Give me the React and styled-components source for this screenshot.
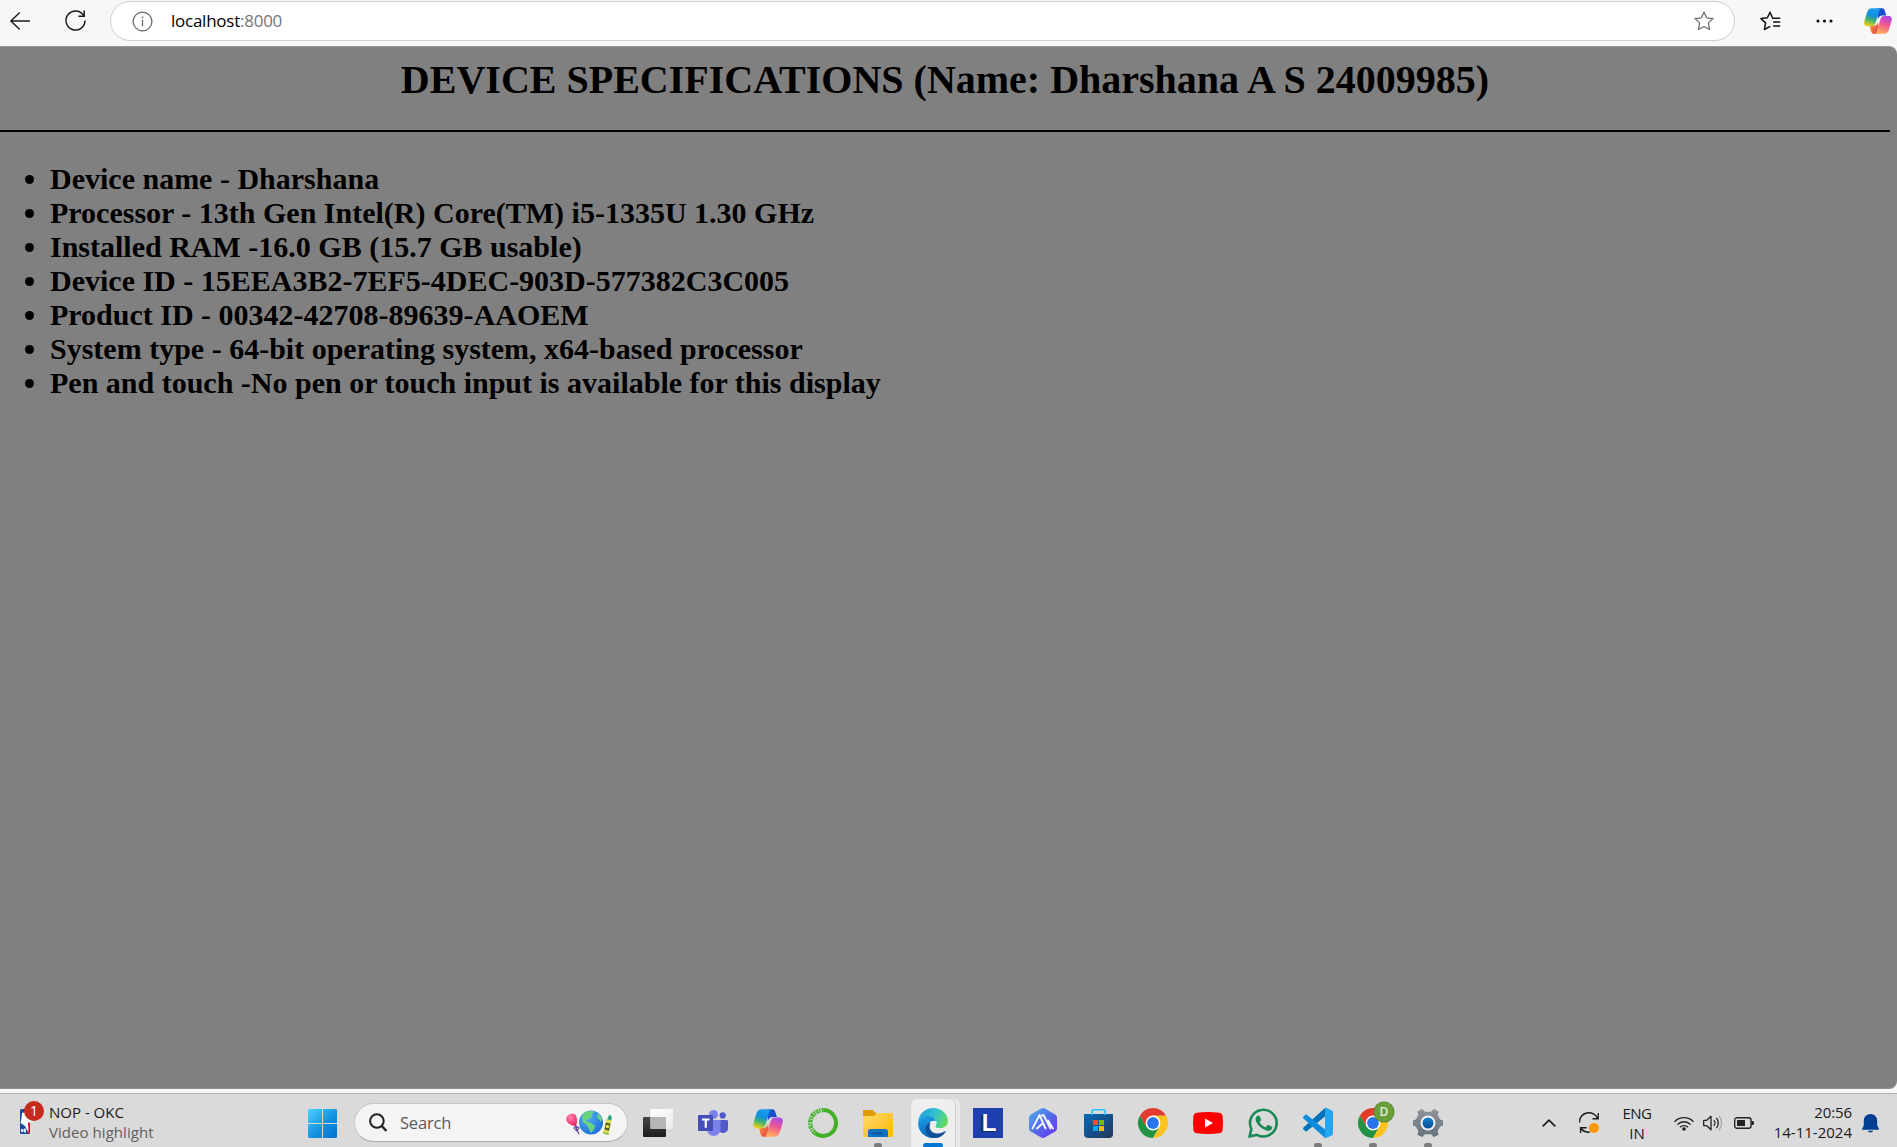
import React, { useId } from "react";
import styled, { createGlobalStyle } from "styled-components";

const GlobalStyle = createGlobalStyle`
  * { box-sizing: border-box; }
  html, body { margin: 0; padding: 0; overflow: hidden; }
  svg { display: block; flex: none; overflow: visible; }
`;

const UI_FONT = `"Open Sans", "Noto Sans", sans-serif`;

const Screen = styled.div`
  width: 1897px;
  height: 1147px;
  display: flex;
  flex-direction: column;
  background: #f7f7f7;
  overflow: hidden;
  font-family: ${UI_FONT};
`;

/* ---------- browser toolbar ---------- */

const Toolbar = styled.header`
  height: 46px;
  flex: none;
  display: flex;
  align-items: flex-start;
  background: #f7f7f7;
`;

const ToolButton = styled.button`
  border: 0;
  padding: 0;
  background: none;
  height: ${(p) => p.$height || 41}px;
  width: ${(p) => p.$width}px;
  margin-left: ${(p) => p.$gap || 0}px;
  display: flex;
  align-items: center;
  justify-content: center;
`;

const AddressBar = styled.div`
  width: 1625px;
  height: 40px;
  margin: 1px 0 0 15px;
  padding: 0 20px 0 21px;
  display: flex;
  align-items: center;
  background: #fff;
  border: 1px solid #cfcfcf;
  border-radius: 20px;
`;

const Url = styled.span`
  flex: 1;
  margin-left: 18px;
  font-size: 17px;
  line-height: 24px;
  letter-spacing: -0.25px;
  color: #000;
`;

const Port = styled.span`
  color: #767676;
`;

/* ---------- page ---------- */

const Page = styled.main`
  height: 1043px;
  flex: none;
  background: #808080;
  border-top: 1px solid #999;
  border-bottom: 1px solid #8f8f8f;
  border-radius: 0 8px 8px 0;
  font-family: "Liberation Serif", "Times New Roman", serif;
  font-weight: bold;
  color: #000;
  padding: 10px 7px 0 0;
`;

const Heading = styled.h1`
  margin: 0;
  font-size: 40px;
  line-height: 46px;
  text-align: center;
`;

const Rule = styled.hr`
  margin: 27px 0 0;
  border: 0;
  height: 2px;
  background: #000;
`;

const SpecList = styled.ul`
  margin: 30px 0 0;
  padding: 0 0 0 50px;
  font-size: 30px;
  line-height: 34px;
`;

/* ---------- taskbar ---------- */

const Taskbar = styled.footer`
  height: 54px;
  flex: none;
  margin-top: 4px;
  padding-top: 5px;
  display: flex;
  align-items: flex-start;
  background: #dadada;
  border-top: 1px solid #adadad;
  overflow: hidden;
`;

const Widget = styled.div`
  width: 300px;
  flex: none;
  height: 48px;
  padding: 3px 0 0 20px;
  display: flex;
`;

const WidgetIcon = styled.div`
  position: relative;
  width: 29px;
  padding-top: 7px;
`;

const Count = styled.span`
  position: absolute;
  left: 4px;
  top: -1px;
  width: 20px;
  height: 20px;
  border-radius: 50%;
  background: #c42b1c;
  color: #fff;
  font-size: 14px;
  line-height: 20px;
  text-align: center;
`;

const Lines = styled.div`
  display: flex;
  flex-direction: column;
  align-items: ${(p) => p.$align || "flex-start"};
  width: ${(p) => (p.$width ? p.$width + "px" : "auto")};
  margin-bottom: ${(p) => p.$bottom || 0}px;
  margin-right: ${(p) => p.$gap || 0}px;
`;

const Label = styled.span`
  font-size: 15px;
  line-height: 20px;
  white-space: nowrap;
  letter-spacing: ${(p) => p.$spacing || 0}px;
  color: ${(p) => p.$color || "#1b1b1b"};
`;

const Apps = styled.nav`
  display: flex;
  flex: none;
  gap: 11px;
  height: 48px;
`;

const AppButton = styled.div`
  position: relative;
  width: 44px;
  height: 48px;
  display: flex;
  align-items: center;
  justify-content: center;
  border-radius: 6px 6px 0 0;
  background: ${(p) => (p.$active ? "#eeeeee" : "none")};
  box-shadow: ${(p) => (p.$active ? "1px 0 0 #cdcdcd, 5px 0 0 #e9e9e9" : "none")};
`;

const Indicator = styled.span`
  position: absolute;
  bottom: -1px;
  left: 50%;
  transform: translateX(-50%);
  width: ${(p) => (p.$active ? 20 : 8)}px;
  height: 5px;
  border-radius: 3px;
  background: ${(p) => (p.$active ? "#0078d4" : "#7c7c7c")};
`;

const Search = styled.div`
  width: 274px;
  height: 39px;
  margin: 4px -3px 0 -1px;
  padding: 0 15px 0 14px;
  display: flex;
  align-items: center;
  background: #f4f4f4;
  border: 1px solid #c6c6c6;
  border-bottom-color: #adadad;
  border-radius: 20px;
`;

const SearchText = styled.span`
  flex: 1;
  margin-left: 13px;
  font-size: 16.5px;
  letter-spacing: -0.2px;
  color: #5a5a5a;
`;

const ProfileBadge = styled.span`
  position: absolute;
  right: 1px;
  top: 3px;
  width: 20px;
  height: 20px;
  border-radius: 50%;
  background: #689f38;
  box-shadow: 0 0 0 0.5px #4c7a26;
  color: #e5f0da;
  font-size: 12px;
  font-weight: 600;
  line-height: 20px;
  text-align: center;
`;

const Tray = styled.div`
  margin-left: auto;
  flex: none;
  height: 48px;
  display: flex;
  align-items: center;
  padding-right: 18px;
`;

const Slot = styled.div`
  width: ${(p) => p.$width}px;
  flex: none;
  margin-right: ${(p) => p.$gap || 0}px;
  display: flex;
  justify-content: center;
`;

/* ---------- toolbar icons ---------- */

const BackIcon = () => (
  <svg width="20" height="18" viewBox="0 0 20 18" fill="none" stroke="#1b1b1b" strokeWidth="1.4">
    <path d="M20 9H.9M9.7.6.9 9l8.8 8.4" />
  </svg>
);

const ReloadIcon = () => (
  <svg width="21" height="21" viewBox="0 0 21 21" fill="none" stroke="#1b1b1b" strokeWidth="1.5">
    <path d="M18.9 6.1A9.5 9.5 0 1 0 20 10.4" />
    <path d="M19.2.6v5.7h-5.8" />
  </svg>
);

const InfoIcon = () => (
  <svg width="21" height="21" viewBox="0 0 21 21" fill="none" stroke="#6b6b6b" strokeWidth="1.3">
    <circle cx="10.5" cy="10.5" r="9.4" />
    <path d="M10.5 9v6.3" />
    <circle cx="10.5" cy="6.4" r=".9" fill="#6b6b6b" stroke="none" />
  </svg>
);

const StarIcon = () => (
  <svg width="20" height="20" viewBox="0 0 20 20" fill="none" stroke="#6d6d6d" strokeWidth="1.3" strokeLinejoin="round">
    <path d="m10 1.2 2.6 5.6 6.4.8-4.6 4.3 1.2 6.6-5.6-3-5.6 3 1.2-6.6L1 7.6l6.4-.8z" />
  </svg>
);

const FavoritesIcon = () => (
  <svg width="21" height="20" viewBox="0 0 21 20" fill="none" stroke="#111" strokeWidth="1.5" strokeLinejoin="round" strokeLinecap="round">
    <path d="M12.7 7.2 10 1.2 7.4 6.8 1 7.6l4.6 4.3-1.2 6.6 5.3-2.8M13.7 11h6M13.7 15h6M12.7 7.2h7" />
  </svg>
);

const MoreIcon = () => (
  <svg width="17" height="4" viewBox="0 0 17 4" fill="#111">
    <circle cx="2" cy="2" r="1.6" />
    <circle cx="8.5" cy="2" r="1.6" />
    <circle cx="15" cy="2" r="1.6" />
  </svg>
);

const CopilotIcon = ({ size = 30 }) => {
  const id = useId().replace(/:/g, "");
  return (
    <svg width={size} height={(size * 28) / 30} viewBox="0 0 30 28">
      <defs>
        <linearGradient id={id + "a"} x1=".6" y1="0" x2=".3" y2="1">
          <stop offset="0" stopColor="#1b9df0" />
          <stop offset=".4" stopColor="#1390dc" />
          <stop offset=".66" stopColor="#45b36b" />
          <stop offset="1" stopColor="#f4d313" />
        </linearGradient>
        <linearGradient id={id + "b"} x1=".7" y1="0" x2=".4" y2="1">
          <stop offset="0" stopColor="#a84be8" />
          <stop offset=".45" stopColor="#ee5594" />
          <stop offset="1" stopColor="#ffb05c" />
        </linearGradient>
        <linearGradient id={id + "c"} x1="0" y1="0" x2="1" y2="1">
          <stop offset="0" stopColor="#1656c4" />
          <stop offset="1" stopColor="#1948d6" />
        </linearGradient>
        <linearGradient id={id + "d"} x1="0" y1="0" x2="1" y2="1">
          <stop offset="0" stopColor="#f9a13c" />
          <stop offset="1" stopColor="#e2364b" />
        </linearGradient>
      </defs>
      <path fill={`url(#${id}c)`} d="M14 .3h5.6c1.9 0 2.5 1.7 3.2 4.2L23.9 8h-4c-3 0-4 1.6-5 4z" />
      <path fill={`url(#${id}d)`} d="M16 27.7h-5.6c-1.9 0-2.5-1.7-3.2-4.2L6.1 19h4c3 0 4-1.6 5-4z" />
      <path fill={`url(#${id}a)`} d="M8.8.3h9.4c-1.3.7-1.9 2.6-2.6 5l-2.8 9.4c-1 3.2-2 4.8-4.6 4.8H4.4C.6 19.5-.5 17.3.5 13.8L3.2 5C4.2 1.8 5.8.3 8.8.3z" />
      <path fill={`url(#${id}b)`} d="M21.2 27.7h-9.4c1.3-.7 1.9-2.6 2.6-5l2.8-9.4c1-3.2 2-4.8 4.6-4.8h3.8c3.8 0 4.9 2.2 3.9 5.7L26.8 23c-1 3.2-2.6 4.7-5.6 4.7z" />
    </svg>
  );
};

/* ---------- taskbar icons ---------- */

const NbaIcon = () => (
  <svg width="10" height="25" viewBox="0 0 10 25">
    <rect width="10" height="25" rx="1.5" fill="#17479e" />
    <path fill="#c8102e" d="M6 0h4v23.5L9 25H8L6 16z" />
    <path fill="#fff" d="m2 4 4-1 5 6-1 5-2-1 .5 10.500L5 17l-4.500-3 1-5z" />
    <path stroke="#dce4f4" strokeWidth="1.100" fill="none" d="M1.500 23v-3l1.500 3v-3m1.500 0v3h1v-3z" />
  </svg>
);

const WindowsIcon = () => (
  <svg width="29" height="29" viewBox="0 0 29 29">
    <defs>
      <linearGradient id="win" x1="0" y1="0" x2="29" y2="29" gradientUnits="userSpaceOnUse">
        <stop offset="0" stopColor="#4cd3ff" />
        <stop offset=".55" stopColor="#1592df" />
        <stop offset="1" stopColor="#0070d1" />
      </linearGradient>
    </defs>
    <path fill="url(#win)" d="M1 0h13v14H0V1zM15 0h13l1 1v13H15zM0 15h14v14H1l-1-1zM15 15h14v13l-1 1H15z" />
  </svg>
);

const SearchIcon = () => (
  <svg width="18" height="19" viewBox="0 0 18 19" fill="none" stroke="#222" strokeWidth="2">
    <circle cx="7.9" cy="8" r="6.8" />
    <path strokeWidth="2.5" d="m12.8 13 4.6 5" />
  </svg>
);

const DoodleIcon = () => (
  <svg width="46" height="26" viewBox="0 0 46 26">
    <defs>
      <radialGradient id="globe" cx=".35" cy=".3" r=".8">
        <stop offset="0" stopColor="#55adf5" />
        <stop offset="1" stopColor="#176cd2" />
      </radialGradient>
      <radialGradient id="balloon" cx=".4" cy=".3" r=".7">
        <stop offset="0" stopColor="#ff83ac" />
        <stop offset="1" stopColor="#f02468" />
      </radialGradient>
    </defs>
    <path fill="url(#balloon)" d="M5 4c4-1 6 2 6 6 0 3-.5 5-1 6-5 0-9.700-3-9.700-7C.3 6.500 2 4.500 5 4z" />
    <path fill="none" stroke="#67459b" strokeWidth="1.200" d="m10 16-2 2 3 3 2-3-3-2 1 4 2 4" />
    <circle cx="25" cy="12.500" r="12" fill="url(#globe)" />
    <path fill="#68d47b" d="M17 4C19.500 1 24 .2 27 1l1 2-3 1.500 2 1-3 3-3 1-1 2 4 1 5 3-1 4-3 3.500-2-4-2-4-4-3-1-4zM32 3l4 5-1 4-2-3-2-1z" />
    <path fill="#2e9f76" d="m43.500 4.500 2 2 0 4.500-4.500-1.500z" />
    <path fill="#d9e04b" d="m40.500 9 5 1.500-3 14-5.500-1.500z" />
    <path fill="#4d5a2e" d="m39.800 12.500 4.700 1.200-1.600 7-4.300-1.300z" />
    <circle cx="41.500" cy="16.500" r="1.700" fill="#e6e34b" />
    <path fill="#7fc24d" d="m37.400 22 5.400 1.400-.4 1.600-5.500-1.500z" />
  </svg>
);

const TaskViewIcon = () => (
  <svg width="30" height="28" viewBox="0 0 30 28">
    <defs>
      <linearGradient id="tvd" x1="0" y1="0" x2="0" y2="1">
        <stop offset="0" stopColor="#454545" />
        <stop offset="1" stopColor="#1d1d1d" />
      </linearGradient>
      <linearGradient id="tvl" x1="0" y1="0" x2="1" y2="1">
        <stop offset="0" stopColor="#fff" />
        <stop offset="1" stopColor="#eaeaea" />
      </linearGradient>
    </defs>
    <rect x="0" y="8" width="23" height="20" rx="1" fill="url(#tvd)" />
    <rect x="7.500" y="0" width="22.500" height="20" rx="1" fill="url(#tvl)" />
    <path fill="#b5b5b5" d="M7.500 8H23v12H7.500z" />
  </svg>
);

const TeamsIcon = () => (
  <svg width="30" height="26" viewBox="0 0 30 26">
    <circle cx="24.700" cy="5.400" r="3.100" fill="#5059c9" />
    <path fill="#5059c9" d="M20 10h8.500c1 0 1.500.6 1.500 1.500v6.500a5 5 0 0 1-9 3z" />
    <circle cx="15.500" cy="4.400" r="4.500" fill="#7b83eb" />
    <path fill="#7b83eb" d="M9 10h13.500v9c0 4-3 7-6.700 7S9 23 9 19z" />
    <rect y="5" width="15" height="16" rx="1" fill="#464eb8" />
    <path fill="#fff" d="M4 8.500h7.500v2H8.800v7.300H6.700v-7.300H4z" />
  </svg>
);

const AnacondaIcon = () => (
  <svg width="30" height="30" viewBox="0 0 30 30" fill="none">
    <path stroke="#43b02a" strokeWidth="4" d="M15.500 2.100A12.900 12.900 0 1 1 7 25" />
    <path stroke="#43b02a" strokeWidth="4.400" strokeDasharray="2.800 .7 1.600 .9" d="M7 25A12.900 12.900 0 0 1 15.500 2.100" />
    <path stroke="#dadada" strokeWidth=".8" strokeDasharray="1.400 2.100" d="M7 25A12.600 12.600 0 0 1 14 2.500" />
  </svg>
);

const FolderIcon = () => (
  <svg width="30" height="27" viewBox="0 0 30 27">
    <defs>
      <linearGradient id="fold" x1="0" y1="0" x2="1" y2="1">
        <stop offset="0" stopColor="#ffda67" />
        <stop offset="1" stopColor="#fbb70c" />
      </linearGradient>
    </defs>
    <path fill="#de9b00" d="M0 1.200C0 .4.500 0 1.200 0h8.500l3 3H29v7H0z" />
    <path fill="url(#fold)" d="M0 6h10.500L14 3h15c.6 0 1 .4 1 1v22c0 .6-.4 1-1 1H1c-.6 0-1-.4-1-1z" />
    <path fill="#0f6fc0" d="M5 27v-5.500C5 20 6 19 7.500 19h15c1.500 0 2.500 1 2.500 2.500V27z" />
    <rect x="9.500" y="22.500" width="11" height="1.700" rx=".8" fill="#0b4f94" />
  </svg>
);

const EdgeIcon = () => (
  <svg width="30" height="30" viewBox="0 0 30 30">
    <defs>
      <linearGradient id="edgeTop" x1="0" y1=".3" x2="1" y2=".6">
        <stop offset="0" stopColor="#249bd9" />
        <stop offset=".5" stopColor="#30c1d0" />
        <stop offset="1" stopColor="#65dc5b" />
      </linearGradient>
      <linearGradient id="edgeLeft" x1=".2" y1="0" x2=".6" y2="1">
        <stop offset="0" stopColor="#1ca1e6" />
        <stop offset="1" stopColor="#0860b3" />
      </linearGradient>
    </defs>
    <path fill="url(#edgeTop)" d="M.3 13C1.300 5.500 7.500 0 15 0c8.500 0 15 6 15 13 0 4.500-3.600 7.300-8 7.300-3.500 0-4.800-1-4.800-2 0-.7 1.200-1.200 1.200-3.300 0-3.500-3.600-6.700-8.900-6.700C4.500 8.300 1.300 10.800.3 13z" />
    <path fill="url(#edgeLeft)" d="M.1 14C.7 10.600 4 8 9.200 8c4.600 0 7.700 2.300 8.800 5-4.500-1.500-8 2-8 6 0 5 4 9.500 10 10-1.500.6-3.200 1-5 1C6.500 30-.5 23.200.1 14z" />
    <path fill="#124f96" d="M13 14.400c-3.500 5 0 11 6.500 11 4 0 6.500-1.700 7.500-2.200.6-.3 1 .2.600.7-2.600 3.900-6.400 6-10.600 6.100C10.500 29.500 7.500 24 7.700 20c.2-3 2.300-5 5.300-5.600z" />
    <path fill="#eee" d="M18.400 13.800c.4 2.600-1.200 3.700-1.200 4.500 0 1 1.300 2 4.800 2 2 0 3.500-.5 5-1.400-.4 2.500-2.500 3.700-5.500 3.700-6 0-10-3.600-8.900-8.300 1.500-1.500 4-1.700 5.800-.5z" />
  </svg>
);

const LTile = styled.span`
  width: 30px;
  height: 30px;
  background: #1e3fae;
  color: #fff;
  font-family: "Liberation Sans", Arial, sans-serif;
  font-weight: bold;
  font-size: 24px;
  line-height: 29px;
  text-align: center;
  text-indent: 2px;
  text-shadow: -1px 1px 0 #102e58, -2px 1px 0 #102e58;
`;

const HexIcon = () => (
  <svg width="28" height="30" viewBox="0 0 28 30">
    <defs>
      <linearGradient id="hex" x1="0" y1="0" x2="1" y2="1">
        <stop offset="0" stopColor="#4db2e9" />
        <stop offset=".5" stopColor="#536ce9" />
        <stop offset="1" stopColor="#702cf0" />
      </linearGradient>
    </defs>
    <path fill="url(#hex)" d="M11.800.7c1.400-.9 3-.9 4.400 0l9.600 5.500C27.300 7 28 8.200 28 10v10c0 1.800-.7 3-2.200 3.800l-9.600 5.500c-1.400.9-3 .9-4.400 0l-9.600-5.500C.7 23 0 21.800 0 20V10c0-1.800.7-3 2.200-3.800z" />
    <path fill="none" stroke="#f5f5ff" strokeWidth="1.900" strokeLinecap="round" strokeLinejoin="round" d="m3.500 20.500 7-13.500 6 13.500M8 20.500l4.800-4.500M13 7.500l1.500-.5 7 13.500M19 12.500l5 8" />
  </svg>
);

const StoreIcon = () => (
  <svg width="29" height="29" viewBox="0 0 29 29">
    <defs>
      <linearGradient id="store" x1="0" y1="0" x2="1" y2="1">
        <stop offset="0" stopColor="#0669ba" />
        <stop offset="1" stopColor="#243858" />
      </linearGradient>
    </defs>
    <path fill="url(#store)" d="M0 5h29v20c0 2.700-1.300 4-4 4H4c-2.700 0-4-1.300-4-4z" />
    <path fill="none" stroke="#29c3fa" strokeWidth="1.600" d="M8 6V2c0-.8.400-1.200 1.200-1.200h10.600c.8 0 1.200.4 1.200 1.200v4" />
    <path fill="#f25022" d="M9 11h5v5H9z" />
    <path fill="#7fba00" d="M15 11h5v5h-5z" />
    <path fill="#00a4ef" d="M9 17h5v5H9z" />
    <path fill="#ffb900" d="M15 17h5v5h-5z" />
  </svg>
);

const ChromeIcon = () => (
  <svg width="30" height="30" viewBox="0 0 30 30">
    <path fill="#229342" d="M2 7.500a15 15 0 0 0 13 22.500l6.500-11.200L15 15 8.500 18.800z" />
    <path fill="#fcc31e" d="M28 7.500A15 15 0 0 1 15 30l6.500-11.200L15 7.500z" />
    <path fill="#e33b2e" d="M2 7.500 8.500 18.800 15 15V7.500h13A15 15 0 0 0 2 7.500z" />
    <circle cx="15" cy="15" r="7.400" fill="#fff" />
    <circle cx="15" cy="15" r="5.900" fill="#2a75eb" />
  </svg>
);

const YouTubeIcon = () => (
  <svg width="30" height="22" viewBox="0 0 30 22">
    <path fill="#f00" d="M4 .7Q15-.5 26 .7q3.200.3 3.600 3.500.8 6.800 0 13.600-.4 3.200-3.600 3.500-11 1.200-22 0-3.200-.3-3.600-3.500-.8-6.800 0-13.600Q.8 1 4 .7z" />
    <path fill="#fff" d="m12 6.500 8 4.500-8 4.500z" />
  </svg>
);

const WhatsAppIcon = () => (
  <svg width="30" height="30" viewBox="0 0 30 30">
    <path fill="none" stroke="#188a55" strokeWidth="2.600" strokeLinejoin="round" d="M1.500 28.600 3.400 21A13.300 13.300 0 1 1 9 26.800z" />
    <path fill="#188a55" d="M10.500 7.700c.7 0 1 .1 1.300.8l1.300 3.100c.2.600-.8 1.700-1.200 2.200-.2.300-.2.500 0 .9 1.200 2 2.900 3.500 5.100 4.400.5.200.7.1 1-.2l1.400-1.700c.3-.4.600-.4 1-.2l3.100 1.500c.4.200.7.300.7.6.1 1-.4 2.500-1.500 3.100-1.500.9-3.200.7-5 .1-4.300-1.500-7.500-4.700-9.300-8-1-2-1.200-4.600.7-6.200.4-.3.800-.4 1.400-.4z" />
  </svg>
);

const VSCodeIcon = () => (
  <svg width="30" height="30" viewBox="0 0 30 30">
    <path fill="#0072b7" d="M30 5.500 22 0 .5 19.600c-.6.600-.6 1.400 0 2l1.700 1.500c.4.400 1 .4 1.500.1L22 8.500z" />
    <path fill="#0d8ddb" d="M30 24.500 22 30 .5 10.500c-.6-.6-.6-1.400 0-2l1.700-1.600c.4-.4 1-.4 1.500-.1L22 21.500z" />
    <path fill="#27a5ef" d="M22 0c.7-.3 1.300-.1 2 .2l4.900 2.400c.7.300 1.100 1 1.100 1.800v21.200c0 .8-.4 1.500-1.100 1.800L24 29.800c-.7.300-1.300.5-2 .2z" />
  </svg>
);

const SettingsIcon = () => (
  <svg width="30" height="28" viewBox="0 0 30 28">
    <defs>
      <linearGradient id="gear" x1="0" y1="0" x2="0" y2="1">
        <stop offset="0" stopColor="#8e949b" />
        <stop offset="1" stopColor="#68717a" />
      </linearGradient>
      <linearGradient id="gearCore" x1="0" y1="0" x2="0" y2="1">
        <stop offset="0" stopColor="#1180ce" />
        <stop offset="1" stopColor="#0a4c91" />
      </linearGradient>
    </defs>
    <path
      fill="url(#gear)"
      d="M6 1.400C7.200.8 8.600.1 9.700 0c.8 1.300 1.400 2.700 2.900 2.700h4.800c1.500 0 2.100-1.400 2.900-2.700 1.100.1 2.500.8 3.700 1.400.8.500 1.300.9 1.700 1.400-.9 1.900-1.300 3-.5 4.300l1.700 2.800c.6 1 1.700 1.100 3 1.200.2 2 .2 3.800 0 5.800-1.300.1-2.400.2-3 1.200l-1.700 2.800c-.8 1.300-.4 2.400.5 4.300-.4.500-.9.900-1.700 1.400-1.200.6-2.600 1.300-3.700 1.400-.8-1.300-1.400-2.700-2.900-2.700h-4.800c-1.500 0-2.100 1.400-2.900 2.700-1.100-.1-2.500-.8-3.700-1.400-.8-.5-1.300-.9-1.700-1.400.9-1.900 1.300-3 .5-4.300l-1.700-2.800c-.6-1-1.700-1.100-3-1.200-.2-2-.2-3.800 0-5.800 1.300-.1 2.400-.2 3-1.200l1.700-2.800c.8-1.300.4-2.400-.5-4.300.4-.5.900-.9 1.700-1.400z"
    />
    <circle cx="15" cy="14" r="7.500" fill="#f3f3f3" />
    <circle cx="15" cy="14" r="5.500" fill="url(#gearCore)" />
  </svg>
);

/* ---------- tray icons ---------- */

const ChevronIcon = () => (
  <svg width="14" height="8" viewBox="0 0 14 8" fill="none" stroke="#1b1b1b" strokeWidth="1.700">
    <path d="M.7 7.300 7 1.200l6.300 6.100" />
  </svg>
);

const SyncIcon = () => (
  <svg width="20" height="20" viewBox="0 0 20 20" fill="none" stroke="#1b1b1b" strokeWidth="1.400">
    <path d="M.7 9.500A9.300 8.500 0 0 1 18.700 5.500M19.200 0v5.700h-5.700M1.600 20v-5.300h6M1.800 15c2 3 5 4.500 9 4.300" />
    <circle cx="15" cy="15" r="5" fill="#ff9800" stroke="none" />
  </svg>
);

const WifiIcon = () => (
  <svg width="20" height="15" viewBox="0 0 20 15" fill="none" stroke="#222" strokeWidth="1.300">
    <path d="M.5 5.700a13.300 13.300 0 0 1 19 0M3.300 8.600a9.300 9.300 0 0 1 13.400 0M6 11.300a5.600 5.600 0 0 1 8 0" />
    <circle cx="10" cy="13" r="1.800" fill="#222" stroke="none" />
  </svg>
);

const SpeakerIcon = () => (
  <svg width="20" height="16" viewBox="0 0 20 16" fill="none" stroke="#222" strokeWidth="1.300" strokeLinejoin="round">
    <path d="M.7 5.300v5.400h3L8 14.700V1.300L3.700 5.300z" />
    <path d="M10.800 5.200a4 4 0 0 1 0 5.600M13.300 2.900a7.500 7.500 0 0 1 0 10.200" />
    <path stroke="#aaa" d="M15.900.8a11 11 0 0 1 0 14.400" />
  </svg>
);

const BatteryIcon = () => (
  <svg width="20" height="12" viewBox="0 0 20 12">
    <rect x=".7" y=".7" width="16.300" height="10.600" rx="2.300" fill="none" stroke="#222" strokeWidth="1.400" />
    <rect x="3" y="3" width="8" height="6" fill="#222" />
    <path fill="#222" d="M17.500 4H19l1 1v2l-1 1h-1.500z" />
  </svg>
);

const BellIcon = () => (
  <svg width="17" height="19" viewBox="0 0 17 19" fill="#003e92">
    <path d="M8.500 0a6.600 6.600 0 0 1 6.700 6.500v5l1.600 3c.3.700 0 1.300-.8 1.300H1c-.8 0-1.100-.6-.8-1.300l1.600-3v-5A6.600 6.600 0 0 1 8.500 0zM5.700 16.700h5.600a2.900 2.300 0 0 1-5.600 0z" />
  </svg>
);

const specs = [
  "Device name - Dharshana",
  "Processor - 13th Gen Intel(R) Core(TM) i5-1335U 1.30 GHz",
  "Installed RAM -16.0 GB (15.7 GB usable)",
  "Device ID - 15EEA3B2-7EF5-4DEC-903D-577382C3C005",
  "Product ID - 00342-42708-89639-AAOEM",
  "System type - 64-bit operating system, x64-based processor",
  "Pen and touch -No pen or touch input is available for this display",
];

const apps = [
  { key: "taskview", icon: <TaskViewIcon /> },
  { key: "teams", icon: <TeamsIcon /> },
  { key: "copilot", icon: <CopilotIcon /> },
  { key: "anaconda", icon: <AnacondaIcon /> },
  { key: "files", icon: <FolderIcon />, running: true },
  { key: "edge", icon: <EdgeIcon />, running: true, active: true },
  { key: "l", icon: <LTile>L</LTile> },
  { key: "hex", icon: <HexIcon /> },
  { key: "store", icon: <StoreIcon /> },
  { key: "chrome", icon: <ChromeIcon /> },
  { key: "youtube", icon: <YouTubeIcon /> },
  { key: "whatsapp", icon: <WhatsAppIcon /> },
  { key: "vscode", icon: <VSCodeIcon />, running: true },
  { key: "chrome-d", icon: <ChromeIcon />, running: true, badge: "D" },
  { key: "settings", icon: <SettingsIcon />, running: true },
];

export default function App() {
  return (
    <Screen>
      <GlobalStyle />
      <Toolbar>
        <ToolButton $width={40}><BackIcon /></ToolButton>
        <ToolButton $width={40} $gap={15}><ReloadIcon /></ToolButton>
        <AddressBar>
          <InfoIcon />
          <Url>localhost<Port>:8000</Port></Url>
          <StarIcon />
        </AddressBar>
        <ToolButton $width={40} $gap={15}><FavoritesIcon /></ToolButton>
        <ToolButton $width={40} $gap={14}><MoreIcon /></ToolButton>
        <ToolButton $width={28} $gap={20} $height={42}><CopilotIcon size={28} /></ToolButton>
      </Toolbar>

      <Page>
        <Heading>DEVICE SPECIFICATIONS (Name: Dharshana A S 24009985)</Heading>
        <Rule />
        <SpecList>
          {specs.map((s) => <li key={s}>{s}</li>)}
        </SpecList>
      </Page>

      <Taskbar>
        <Widget>
          <WidgetIcon>
            <NbaIcon />
            <Count>1</Count>
          </WidgetIcon>
          <Lines>
            <Label>NOP - OKC</Label>
            <Label $color="#5f5f5f" $spacing={0.05}>Video highlight</Label>
          </Lines>
        </Widget>
        <Apps>
          <AppButton><WindowsIcon /></AppButton>
          <Search>
            <SearchIcon />
            <SearchText>Search</SearchText>
            <DoodleIcon />
          </Search>
          {apps.map((a) => (
            <AppButton key={a.key} $active={a.active}>
              {a.icon}
              {a.badge && <ProfileBadge>{a.badge}</ProfileBadge>}
              {a.running && <Indicator $active={a.active} />}
            </AppButton>
          ))}
        </Apps>
        <Tray>
          <Slot $width={14} $gap={23}><ChevronIcon /></Slot>
          <Slot $width={20} $gap={18}><SyncIcon /></Slot>
          <Lines $align="center" $width={40} $gap={17}>
            <Label $spacing={-0.5}>ENG</Label>
            <Label>IN</Label>
          </Lines>
          <Slot $width={20} $gap={9}><WifiIcon /></Slot>
          <Slot $width={20} $gap={11}><SpeakerIcon /></Slot>
          <Slot $width={20} $gap={18}><BatteryIcon /></Slot>
          <Lines $align="flex-end" $width={80} $gap={10} $bottom={2}>
            <Label $spacing={-0.1}>20:56</Label>
            <Label>14-11-2024</Label>
          </Lines>
          <Slot $width={17}><BellIcon /></Slot>
        </Tray>
      </Taskbar>
    </Screen>
  );
}
